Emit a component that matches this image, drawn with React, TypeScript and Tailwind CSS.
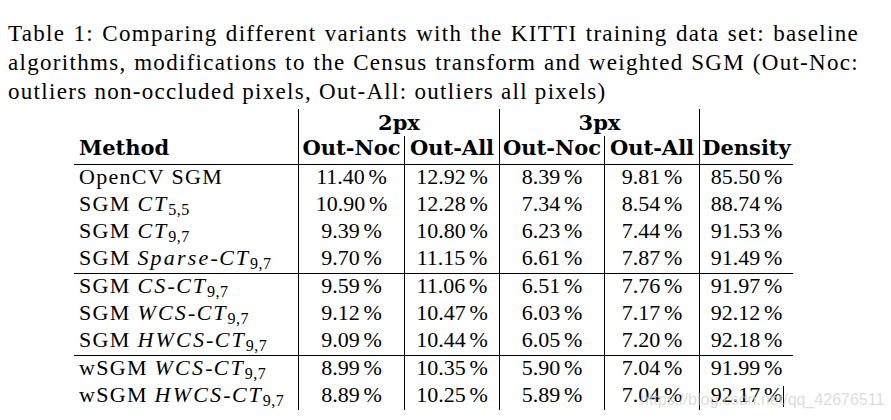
import React from "react";

type Row = { pre: string; a?: string; ct?: boolean; sub?: string; v: string[] };

const g1: Row[] = [
  { pre: "OpenCV SGM", v: ["11.40", "12.92", "8.39", "9.81", "85.50"] },
  { pre: "SGM", ct: true, sub: "5,5", v: ["10.90", "12.28", "7.34", "8.54", "88.74"] },
  { pre: "SGM", ct: true, sub: "9,7", v: ["9.39", "10.80", "6.23", "7.44", "91.53"] },
  { pre: "SGM", a: "Sparse", ct: true, sub: "9,7", v: ["9.70", "11.15", "6.61", "7.87", "91.49"] },
];
const g2: Row[] = [
  { pre: "SGM", a: "CS", ct: true, sub: "9,7", v: ["9.59", "11.06", "6.51", "7.76", "91.97"] },
  { pre: "SGM", a: "WCS", ct: true, sub: "9,7", v: ["9.12", "10.47", "6.03", "7.17", "92.12"] },
  { pre: "SGM", a: "HWCS", ct: true, sub: "9,7", v: ["9.09", "10.44", "6.05", "7.20", "92.18"] },
];
const g3: Row[] = [
  { pre: "wSGM", a: "WCS", ct: true, sub: "9,7", v: ["8.99", "10.35", "5.90", "7.04", "91.99"] },
  { pre: "wSGM", a: "HWCS", ct: true, sub: "9,7", v: ["8.89", "10.25", "5.89", "7.04", "92.17"] },
];

const cols = "grid grid-cols-[224px_106px_95px_105px_95px_94px]";

function Method({ r }: { r: Row }) {
  return (
    <div className="h-[27px] pl-[5px] leading-[23px] whitespace-nowrap tracking-[1.3px]">
      <span>{r.pre}</span>
      {r.ct && (
        <>
          <span> </span>
          {r.a && <span className="italic tracking-[2.2px]">{r.a}</span>}
          {r.a && <span>-</span>}
          <span className="italic tracking-[2px]">CT</span>
          <span className="text-[16px] tracking-[0.5px] align-[-4px]">{r.sub}</span>
        </>
      )}
    </div>
  );
}

function Num({ v }: { v: string }) {
  return (
    <div className="h-[27px] border-l border-black text-center leading-[23px] whitespace-nowrap">
      {v}
      <span className="ml-[3.7px]">%</span>
    </div>
  );
}

function Group({ rows }: { rows: Row[] }) {
  return (
    <div className={cols}>
      {rows.map((r, i) => (
        <React.Fragment key={i}>
          <Method r={r} />
          {r.v.map((v, j) => (
            <Num key={j} v={v} />
          ))}
        </React.Fragment>
      ))}
    </div>
  );
}

export default function App() {
  const bold = "font-['DejaVu_Serif',serif] font-bold text-[21px]";
  return (
    <div className="relative w-[891px] h-[420px] overflow-hidden bg-white text-black font-['Liberation_Serif',serif] text-[22px]">
      <div className="pt-[19px] pl-[8px] w-[859px] text-[23px] leading-[29px] tracking-[1.3px]">
        <div className="text-justify [text-align-last:justify] whitespace-nowrap">
          Table 1: Comparing different variants with the KITTI training data set: baseline
        </div>
        <div className="text-justify [text-align-last:justify] whitespace-nowrap">
          algorithms, modifications to the Census transform and weighted SGM (Out-Noc:
        </div>
        <div className="whitespace-nowrap">
          outliers non-occluded pixels, Out-All: outliers all pixels)
        </div>
      </div>

      <div className="mt-[3px] ml-[74px] w-[719px]">
        <div className={`${cols} ${bold}`}>
          <div className="h-[27px]" />
          <div className="col-span-2 h-[27px] border-l border-black text-center leading-[27px]">2px</div>
          <div className="col-span-2 h-[27px] border-l border-black text-center leading-[27px]">3px</div>
          <div className="h-[27px] border-l border-black" />
          <div className="h-[28px] pl-[5px] leading-[23px]">Method</div>
          <div className="h-[28px] border-l border-black text-center leading-[23px] whitespace-nowrap">Out-Noc</div>
          <div className="h-[28px] border-l border-black text-center leading-[23px] whitespace-nowrap">Out-All</div>
          <div className="h-[28px] border-l border-black text-center leading-[23px] whitespace-nowrap">Out-Noc</div>
          <div className="h-[28px] border-l border-black text-center leading-[23px] whitespace-nowrap">Out-All</div>
          <div className="h-[28px] border-l border-black text-center leading-[23px] whitespace-nowrap">Density</div>
        </div>
        <div className="h-px bg-black" />
        <Group rows={g1} />
        <div className="h-px bg-black" />
        <Group rows={g2} />
        <div className="h-px bg-black" />
        <Group rows={g3} />
      </div>

      <div className="absolute left-[783px] top-[386px] w-px h-[21px] bg-black" />
      <div className="absolute left-[640px] top-[392px] text-[16px] leading-[16px] font-['Liberation_Sans',sans-serif] text-[#d4d4d4]/80 whitespace-nowrap">
        https://blog.csdn.net/qq_42676511
      </div>
    </div>
  );
}
